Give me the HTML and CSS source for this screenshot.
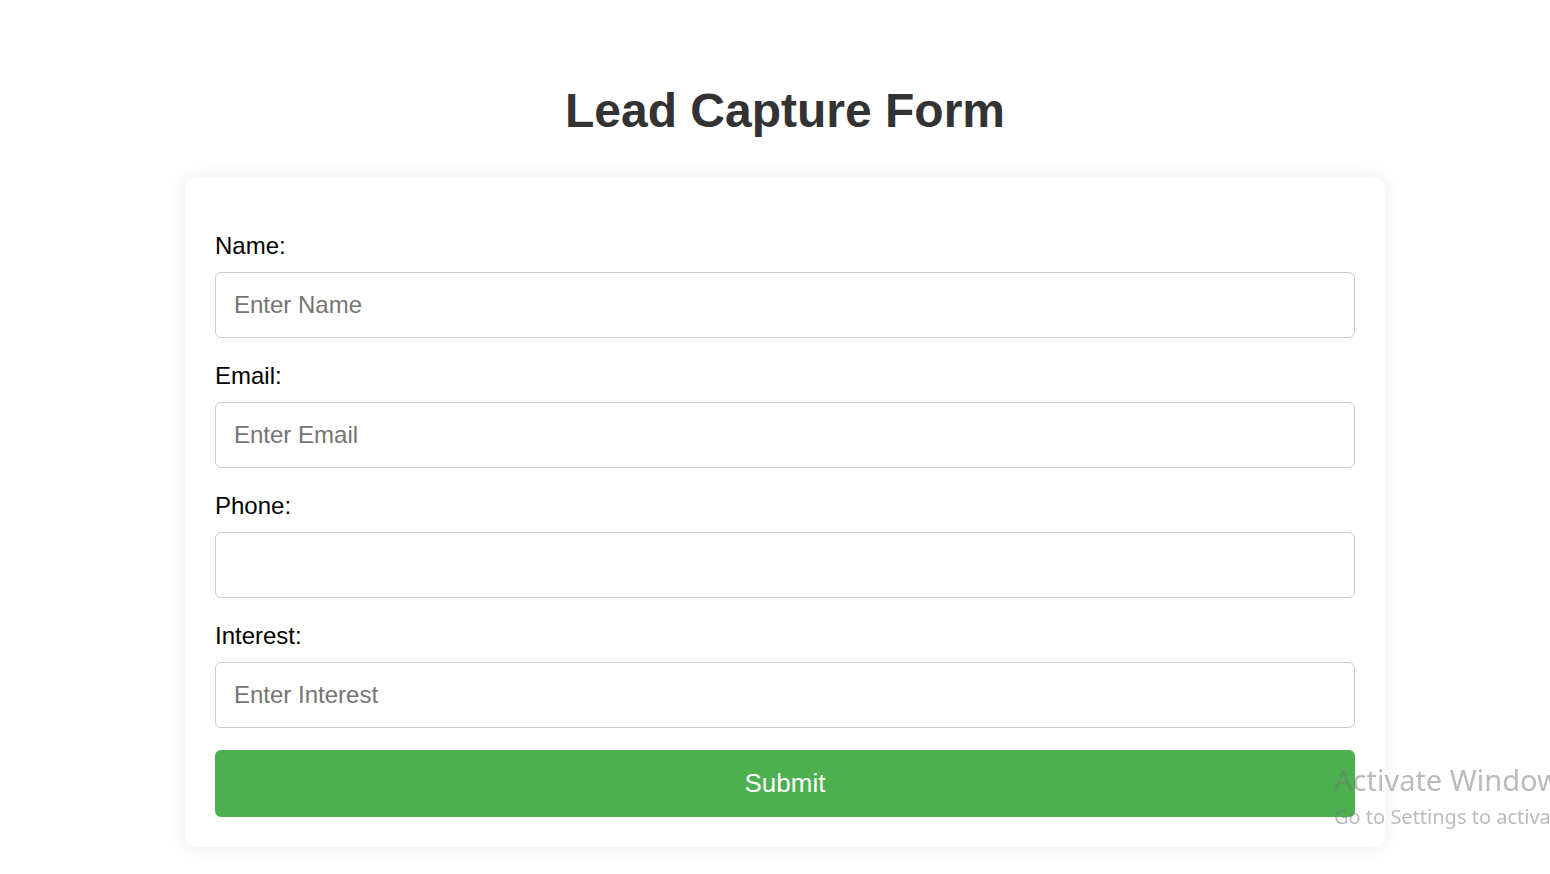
FILE: index.html
```html
<!DOCTYPE html>
<html lang="en">
<head>
<meta charset="utf-8">
<title>Lead Capture Form</title>
<link rel="stylesheet" href="styles.css">
</head>
<body>
<main class="page">
  <h1 class="title">Lead Capture Form</h1>
  <form class="card">
    <label class="field-label" for="name">Name:</label>
    <input class="field-input" id="name" type="text" placeholder="Enter Name">
    <label class="field-label" for="email">Email:</label>
    <input class="field-input" id="email" type="email" placeholder="Enter Email">
    <label class="field-label" for="phone">Phone:</label>
    <input class="field-input" id="phone" type="tel">
    <label class="field-label" for="interest">Interest:</label>
    <input class="field-input" id="interest" type="text" placeholder="Enter Interest">
    <button class="submit-btn" type="submit">Submit</button>
  </form>
</main>
<div class="watermark">
  <div class="wm-title">Activate Windows</div>
  <div class="wm-sub">Go to Settings to activate Windows.</div>
</div>
</body>
</html>
```

FILE: styles.css
```css
html {
  margin: 0;
  padding: 0;
  background: #ffffff;
  overflow: hidden;
}

body {
  margin: 0;
  padding: 0 0 40px 20px;
  font-family: "Liberation Sans", Arial, sans-serif;
}

.page {
  width: 1200px;
  margin: 0 auto;
  padding-top: 83px;
}

.title {
  margin: 0 0 40px;
  text-align: center;
  font-size: 48px;
  font-weight: bold;
  color: #333333;
  line-height: 55px;
}

.card {
  display: flex;
  flex-direction: column;
  background: #ffffff;
  border-radius: 10px;
  box-shadow: 0 0 20px rgba(0, 0, 0, 0.08);
  padding: 30px;
}

.field-label {
  display: block;
  margin: 24px 0 12px;
  font-size: 24px;
  line-height: 28px;
  color: #000000;
}

.field-input {
  display: block;
  box-sizing: border-box;
  width: 100%;
  height: 66px;
  padding: 18px 18px;
  font-family: "Liberation Sans", Arial, sans-serif;
  font-size: 24px;
  line-height: 28px;
  color: #333333;
  border: 1px solid #cccccc;
  border-radius: 6px;
  background: #ffffff;
  outline: none;
}

.field-input::placeholder {
  color: #757575;
}

.submit-btn {
  margin-top: 22px;
  height: 67px;
  width: 100%;
  border: none;
  border-radius: 6px;
  background: #4caf50;
  color: #ffffff;
  font-family: "Liberation Sans", Arial, sans-serif;
  font-size: 26px;
  cursor: pointer;
}

.watermark {
  position: fixed;
  left: 1334px;
  top: 760px;
  white-space: nowrap;
  font-family: "Noto Sans", "Open Sans", sans-serif;
  color: rgba(120, 120, 120, 0.5);
  pointer-events: none;
}

.wm-title {
  font-size: 29px;
  line-height: 40px;
}

.wm-sub {
  font-size: 20px;
  line-height: 34px;
}
```
